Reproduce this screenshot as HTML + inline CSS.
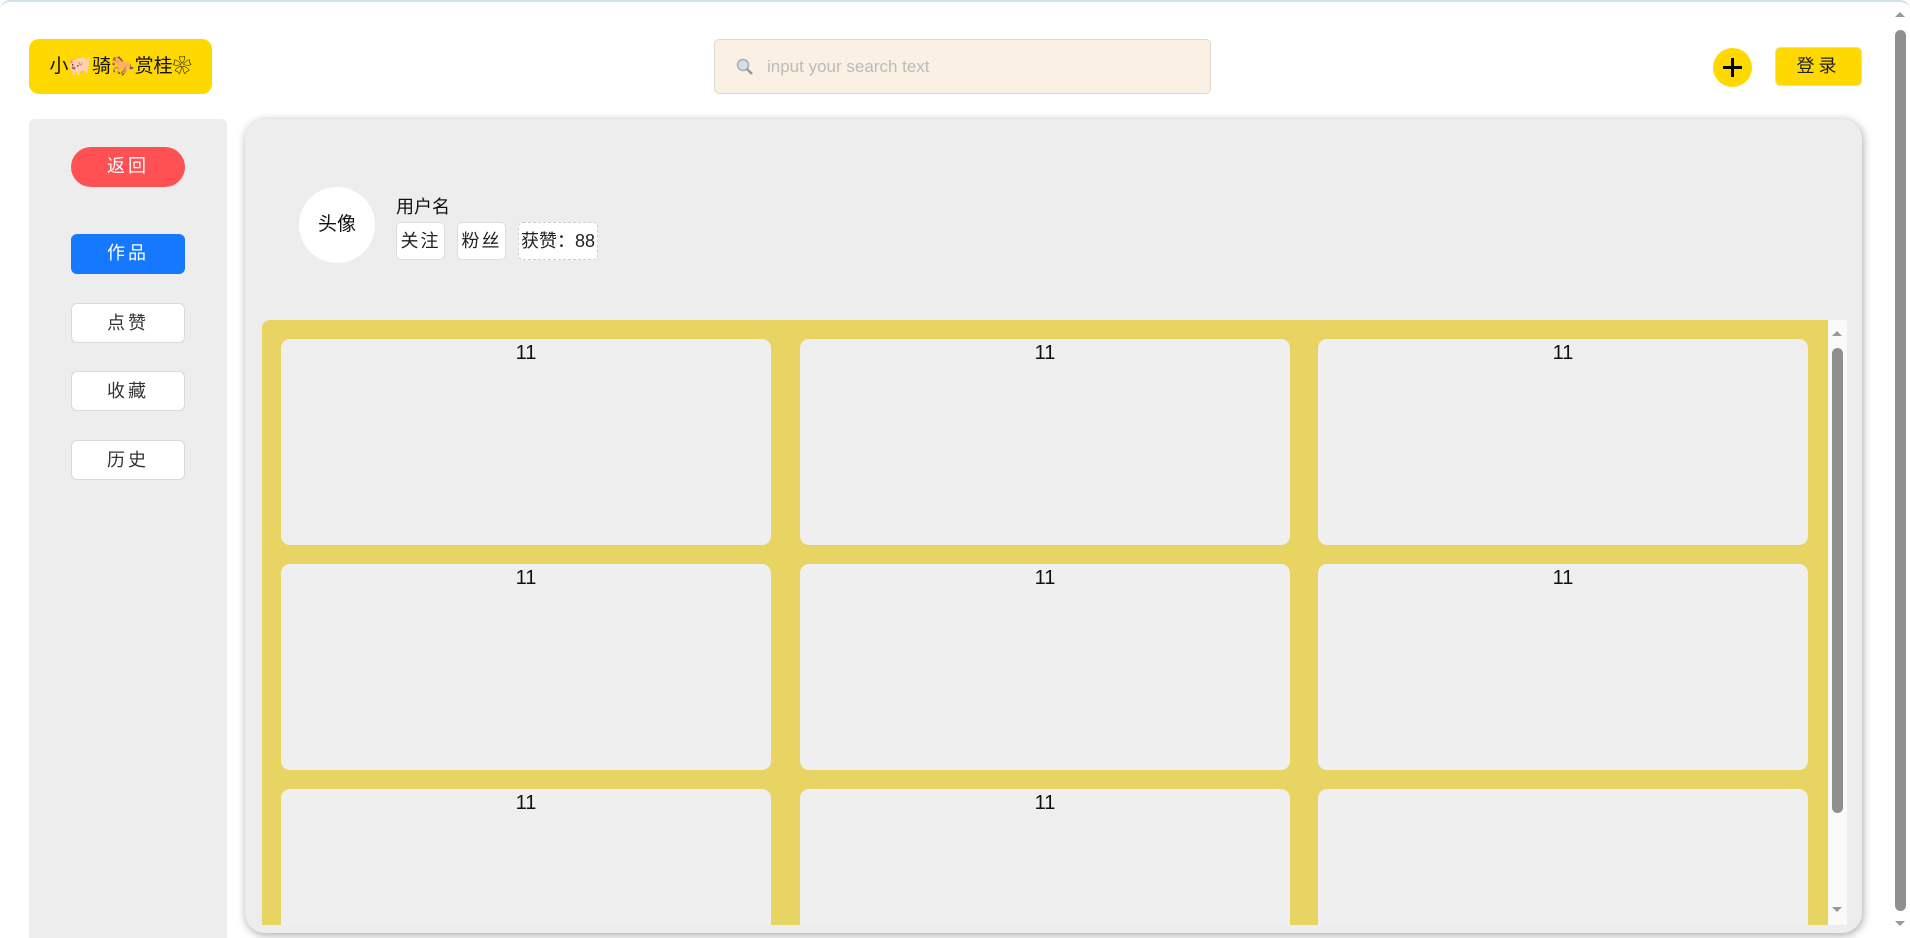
<!DOCTYPE html>
<html style="width:1910px;height:938px;overflow:hidden"><head><meta charset="utf-8"><style>
*{box-sizing:border-box;margin:0;padding:0}
body{width:1910px;height:938px;overflow:hidden;background:#fff;font-family:"Liberation Sans","Noto Sans CJK SC",sans-serif;position:relative}
.page{position:absolute;left:0;top:0;width:1910px;height:938px;background:#fff;border-top:2px solid #d0e4ea;border-radius:10px 10px 0 0}
.abs{position:absolute}
.logo{left:29px;top:39px;width:183px;height:55px;background:#ffd800;border-radius:10px;font-size:19px;line-height:55px;text-align:center;color:#111}
.search{left:714px;top:39px;width:497px;height:55px;background:#faf0e4;border:1px solid #e0d8cc;border-radius:5px;color:#bbb;font-size:17px;line-height:53px;padding-left:52px}
.plus{left:1713px;top:48px;width:39px;height:39px;border-radius:50%;background:#ffd800}
.login{left:1775px;top:47px;width:87px;height:39px;background:#ffd800;border:1px solid #ddd;border-radius:5px;font-size:18px;line-height:37px;text-align:center;letter-spacing:4px;color:#222}
.side{left:29px;top:119px;width:198px;height:819px;background:#ededed;border-radius:6px 6px 0 0}
.sb{left:71px;width:114px;height:40px;border-radius:6px;font-size:18px;line-height:38px;text-align:center;letter-spacing:3px;background:#fff;border:1px solid #d9d9d9;color:#333}
.panel{left:245px;top:119px;width:1617px;height:814px;background:#ededed;border-radius:20px;box-shadow:1px 2px 9px rgba(0,0,0,.35)}
.av{left:299px;top:187px;width:76px;height:76px;border-radius:50%;background:#fff;font-size:19px;line-height:76px;text-align:center;color:#111}
.tag{top:222px;height:38px;background:#fff;border:1px solid #ddd;border-radius:5px;font-size:18px;line-height:36px;text-align:center;color:#222}
.yel{left:262px;top:320px;width:1566px;height:605px;background:#e8d462;border-radius:8px 0 0 0;overflow:hidden}
.card{position:absolute;width:490px;height:206px;background:#efefef;border-radius:9px;text-align:center;font-size:20px;padding-top:3px;color:#111}
</style></head><body>
<div class="page"></div>
<div class="abs logo">小🐖骑🐎赏桂❀</div>
<div class="abs search"><svg class="abs" style="left:20px;top:17px" width="20" height="20" viewBox="0 0 20 20"><circle cx="8" cy="8" r="5.5" fill="#cfe0ea" stroke="#aaa" stroke-width="1.5"/><path d="M12 12l5 5" stroke="#999" stroke-width="2.5"/></svg>input your search text</div>
<div class="abs plus"><svg width="39" height="39"><path d="M19.5 10v19M10 19.5h19" stroke="#000" stroke-width="3"/></svg></div>
<div class="abs login">登录</div>
<div class="abs side"></div>
<div class="abs sb" style="top:147px;background:#ff5053;border:none;color:#fff;border-radius:20px">返回</div>
<div class="abs sb" style="top:234px;background:#1677ff;border:none;color:#fff">作品</div>
<div class="abs sb" style="top:303px">点赞</div>
<div class="abs sb" style="top:371px">收藏</div>
<div class="abs sb" style="top:440px">历史</div>
<div class="abs panel"></div>
<div class="abs av">头像</div>
<div class="abs" style="left:396px;top:193px;font-size:18px;color:#111">用户名</div>
<div class="abs tag" style="left:396px;width:49px;letter-spacing:2px">关注</div>
<div class="abs tag" style="left:457px;width:49px;letter-spacing:2px">粉丝</div>
<div class="abs tag" style="left:518px;width:80px;border:1px dashed #ccc">获赞：88</div>
<div class="abs yel">
<div class="card" style="left:19px;top:19px">11</div>
<div class="card" style="left:538px;top:19px">11</div>
<div class="card" style="left:1056px;top:19px">11</div>
<div class="card" style="left:19px;top:244px">11</div>
<div class="card" style="left:538px;top:244px">11</div>
<div class="card" style="left:1056px;top:244px">11</div>
<div class="card" style="left:19px;top:469px">11</div>
<div class="card" style="left:538px;top:469px">11</div>
<div class="card" style="left:1056px;top:469px"></div>
</div>
<div class="abs" style="left:1828px;top:320px;width:19px;height:605px;background:#fafafa"></div>
<div class="abs" style="left:1832px;top:348px;width:11px;height:465px;background:#8f8f8f;border-radius:6px"></div>
<div class="abs" style="left:1832px;top:331px;width:0;height:0;border:5px solid transparent;border-bottom:5px solid #999;border-top:0"></div>
<div class="abs" style="left:1832px;top:907px;width:0;height:0;border:5px solid transparent;border-top:5px solid #999;border-bottom:0"></div>
<div class="abs" style="left:1895px;top:30px;width:11px;height:881px;background:#8f8f8f;border-radius:6px"></div>
<div class="abs" style="left:1895px;top:12px;width:0;height:0;border:5px solid transparent;border-bottom:5px solid #999;border-top:0"></div>
<div class="abs" style="left:1895px;top:921px;width:0;height:0;border:5px solid transparent;border-top:5px solid #999;border-bottom:0"></div>
</body></html>
